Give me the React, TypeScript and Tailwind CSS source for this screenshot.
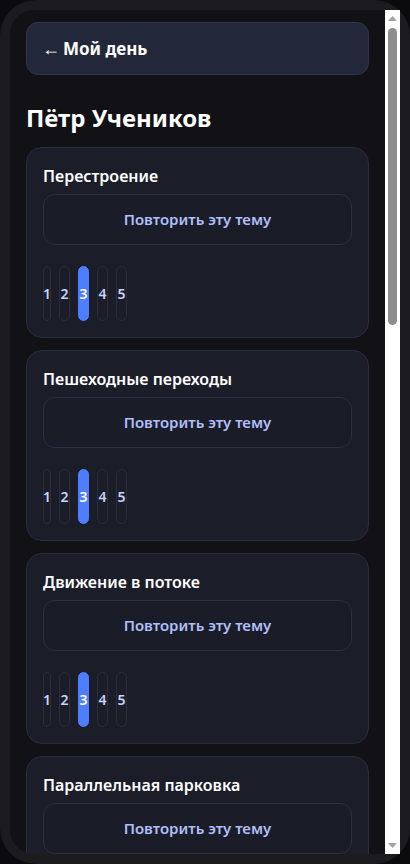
import React, { useState } from 'react';

type Topic = { id: number; title: string; level: number };

const topics: Topic[] = [
  { id: 1, title: 'Перестроение', level: 3 },
  { id: 2, title: 'Пешеходные переходы', level: 3 },
  { id: 3, title: 'Движение в потоке', level: 3 },
  { id: 4, title: 'Параллельная парковка', level: 3 },
  { id: 5, title: 'Разворот', level: 3 },
  { id: 6, title: 'Проезд перекрёстков', level: 3 },
  { id: 7, title: 'Обгон', level: 3 },
  { id: 8, title: 'Старт на подъёме', level: 3 },
  { id: 9, title: 'Круговое движение', level: 3 },
  { id: 10, title: 'Парковка задним ходом', level: 3 },
];

const pillWidth: Record<number, string> = {
  1: 'w-[8px]',
  2: 'w-[11px]',
  3: 'w-[11px]',
  4: 'w-[11px]',
  5: 'w-[11px]',
};

function TopicCard({ topic }: { topic: Topic }) {
  const [level, setLevel] = useState(topic.level);

  return (
    <div className="rounded-2xl border border-[#2a2d3b] bg-[#1b1d28] p-4">
      <div className="text-[16px] font-semibold leading-6 text-white">{topic.title}</div>
      <button className="mt-1.5 flex h-[51px] w-full items-center justify-center rounded-xl border border-[#2c3042] bg-[#1a1c27] text-[15px] font-semibold text-[#b0bff8]">
        Повторить эту тему
      </button>
      <div className="mt-[21px] flex gap-2">
        {[1, 2, 3, 4, 5].map((n) => (
          <button
            key={n}
            onClick={() => setLevel(n)}
            className={`flex h-[55px] ${pillWidth[n]} items-center justify-center overflow-visible rounded-full border text-[14px] font-semibold ${
              n === level
                ? 'border-[#4f7dff] bg-[#4f7dff] text-white'
                : 'border-[#2a2d3b] bg-transparent text-[#c9d3fb]'
            }`}
          >
            {n}
          </button>
        ))}
      </div>
    </div>
  );
}

// the page's scrollbar, drawn the way the screenshot shows it
function Scrollbar() {
  return (
    <div className="flex w-[15px] shrink-0 flex-col bg-white">
      <div className="flex h-[17px] items-start justify-center pt-[6px]">
        <svg width="9" height="5" viewBox="0 0 9 5">
          <polygon points="4.5,0 9,5 0,5" fill="#a3a3a3" />
        </svg>
      </div>
      <div className="flex-1 px-[3px] pt-px">
        <div className="h-[297px] rounded-full bg-[#8e8e8e]" />
      </div>
      <div className="flex h-[17px] items-start justify-center pt-[6px]">
        <svg width="9" height="5" viewBox="0 0 9 5">
          <polygon points="0,0 9,0 4.5,5" fill="#a3a3a3" />
        </svg>
      </div>
    </div>
  );
}

export default function App() {
  return (
    <div className="h-[864px] w-[410px] bg-[#0b0b0d]" style={{ fontFamily: '"Noto Sans", "Open Sans", sans-serif' }}>
      <div className="h-full w-full rounded-[36px] bg-[#1c1b20] p-[10px]">
        <div className="flex h-full">
          <div className="h-full flex-1 overflow-y-auto rounded-l-[24px] bg-[#111116] [scrollbar-width:none]">
            <div className="px-4 pb-[120px] pt-3">
              <button className="flex h-[53px] w-full items-center rounded-xl border border-[#30354a] bg-[#23273a] pl-[15px] pr-4 text-[17px] font-bold text-white">
                <span className="mr-[3px] text-[18px] font-normal">←</span>Мой день
              </button>
              <h1 className="mt-[29px] text-[24px] font-bold leading-7 text-white">Пётр Учеников</h1>
              <div className="mt-[15px] flex flex-col gap-3">
                {topics.map((t) => (
                  <TopicCard key={t.id} topic={t} />
                ))}
              </div>
            </div>
          </div>
          <Scrollbar />
        </div>
      </div>
    </div>
  );
}
